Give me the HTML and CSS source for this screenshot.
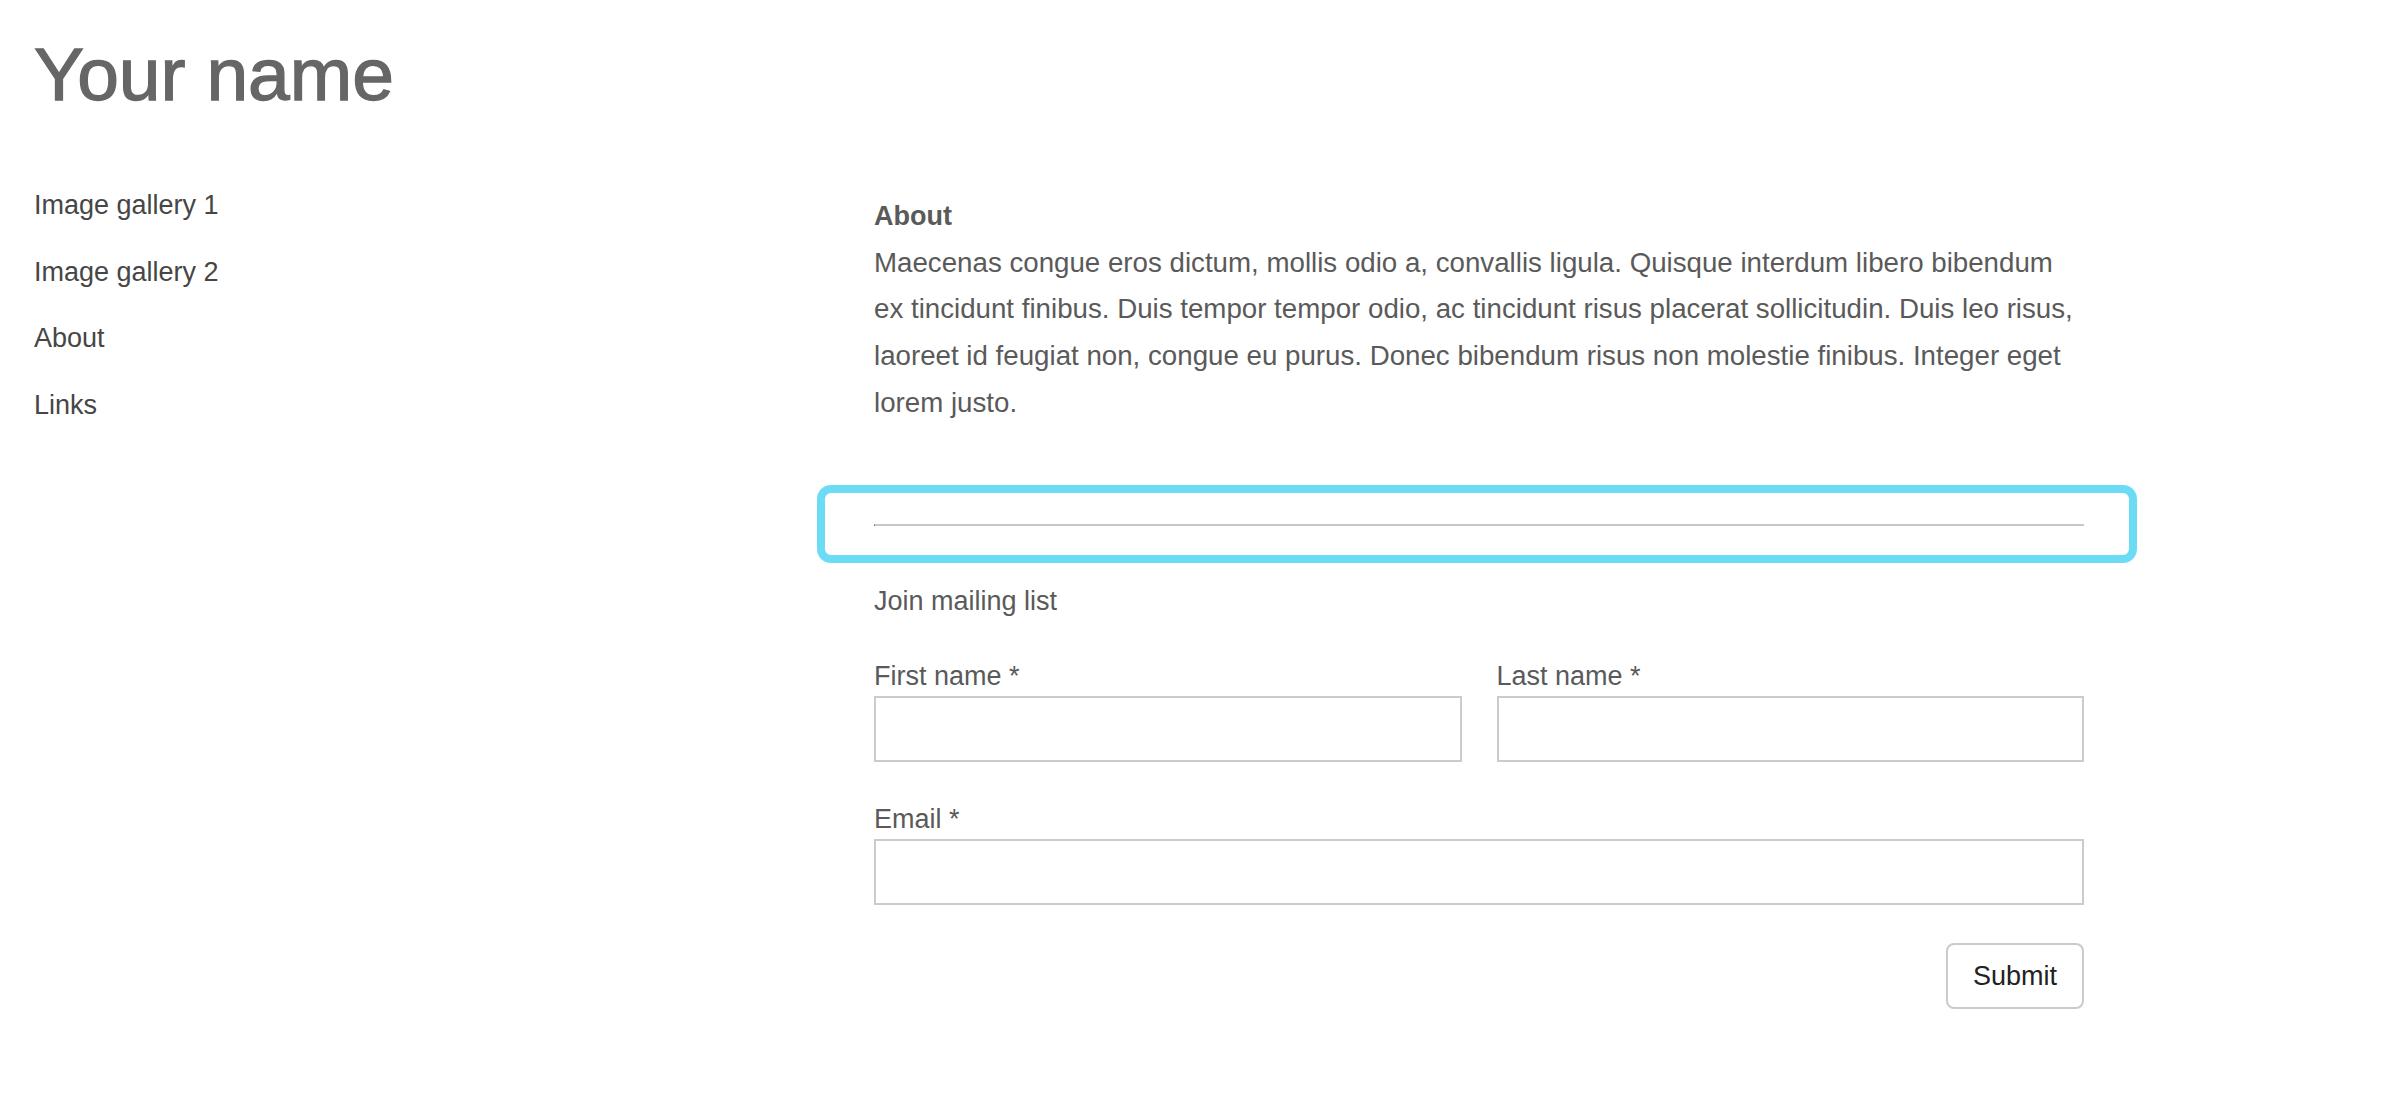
FILE: index.html
```html
<!DOCTYPE html>
<html lang="en">
<head>
  <meta charset="UTF-8" />
  <title>Your name</title>
  <link rel="stylesheet" href="styles.css">
</head>
<body>
  <header class="site-header">
    <h1>Your name</h1>
  </header>

  <div class="layout">
    <nav class="side-nav">
      <ul>
        <li><a href="#">Image gallery 1</a></li>
        <li><a href="#">Image gallery 2</a></li>
        <li><a href="#">About</a></li>
        <li><a href="#">Links</a></li>
      </ul>
    </nav>

    <main class="content">
      <section class="about">
        <strong>About</strong>
        <p>Maecenas congue eros dictum, mollis odio a, convallis ligula. Quisque interdum libero bibendum ex tincidunt finibus. Duis tempor tempor odio, ac tincidunt risus placerat sollicitudin. Duis leo risus, laoreet id feugiat non, congue eu purus. Donec bibendum risus non molestie finibus. Integer eget lorem justo.</p>
      </section>

      <div class="divider">
        <hr>
      </div>

      <p class="join-title">Join mailing list</p>

      <form class="mailing-form" onsubmit="return false;">
        <div class="row">
          <div class="field">
            <label for="firstName">First name *</label>
            <input type="text" id="firstName" required>
          </div>
          <div class="field">
            <label for="lastName">Last name *</label>
            <input type="text" id="lastName" required>
          </div>
        </div>
        <div class="field">
          <label for="email">Email *</label>
          <input type="email" id="email" required>
        </div>
        <div class="actions">
          <button type="submit">Submit</button>
        </div>
      </form>
    </main>
  </div>
</body>
</html>
```

FILE: styles.css
```css
body {
  font-family: 'Liberation Sans', Helvetica, Arial, sans-serif;
  font-size: 27px;
  color: #5a5a5a;
  background: #fff;
  margin: 0;
}
.site-header {
  padding-left: 34px;
}
.site-header h1 {
  margin: 30px 0 0;
  font-size: 75px;
  font-weight: normal;
  line-height: 88px;
  color: #666;
  -webkit-text-stroke: 1.3px #666;
}
.layout {
  display: grid;
  grid-template-columns: 840px 1210px;
  padding-left: 34px;
  margin-top: 52px;
}
.side-nav ul {
  list-style: none;
  margin: 0;
  padding: 2px 0 0;
}
.side-nav li {
  line-height: 66.67px;
}
.side-nav a {
  color: #464646;
  text-decoration: none;
}
.content {
  padding-top: 23px;
  line-height: 46.67px;
}
.about strong {
  display: block;
}
.about p {
  margin: 0;
  font-size: 27.7px;
}
/* riquadro evidenziato attorno al separatore */
.divider {
  margin: 59px -53px 0 -57px;
  padding: 31px 45px 29px 49px;
  border: 8px solid #6cdcf6;
  border-radius: 14px;
}
.divider hr {
  margin: 0;
  border: 0;
  border-top: 2px solid #c8c8c8;
  border-left: 1px solid #555;
  height: 0;
}
.join-title {
  margin: 15px 0 0;
}
.mailing-form {
  margin-top: 34px;
}
.row {
  display: grid;
  grid-template-columns: 1fr 1fr;
  gap: 35px;
}
.field {
  margin-bottom: 40px;
}
.field label {
  display: block;
  line-height: 34px;
}
.field input {
  display: block;
  width: 100%;
  height: 66px;
  margin-top: 3px;
  box-sizing: border-box;
  border: 2px solid #cbcbcb;
  border-radius: 0;
  font-family: inherit;
  font-size: 27px;
  padding: 0 12px;
  outline: none;
}
.field + .actions {
  margin-top: -2px;
}
.actions {
  display: flex;
  justify-content: flex-end;
}
.actions button {
  height: 66px;
  padding: 0 25px;
  background: #fff;
  border: 2px solid #cbcbcb;
  border-radius: 8px;
  font-family: inherit;
  font-size: 27px;
  color: #222;
  cursor: pointer;
}
```
